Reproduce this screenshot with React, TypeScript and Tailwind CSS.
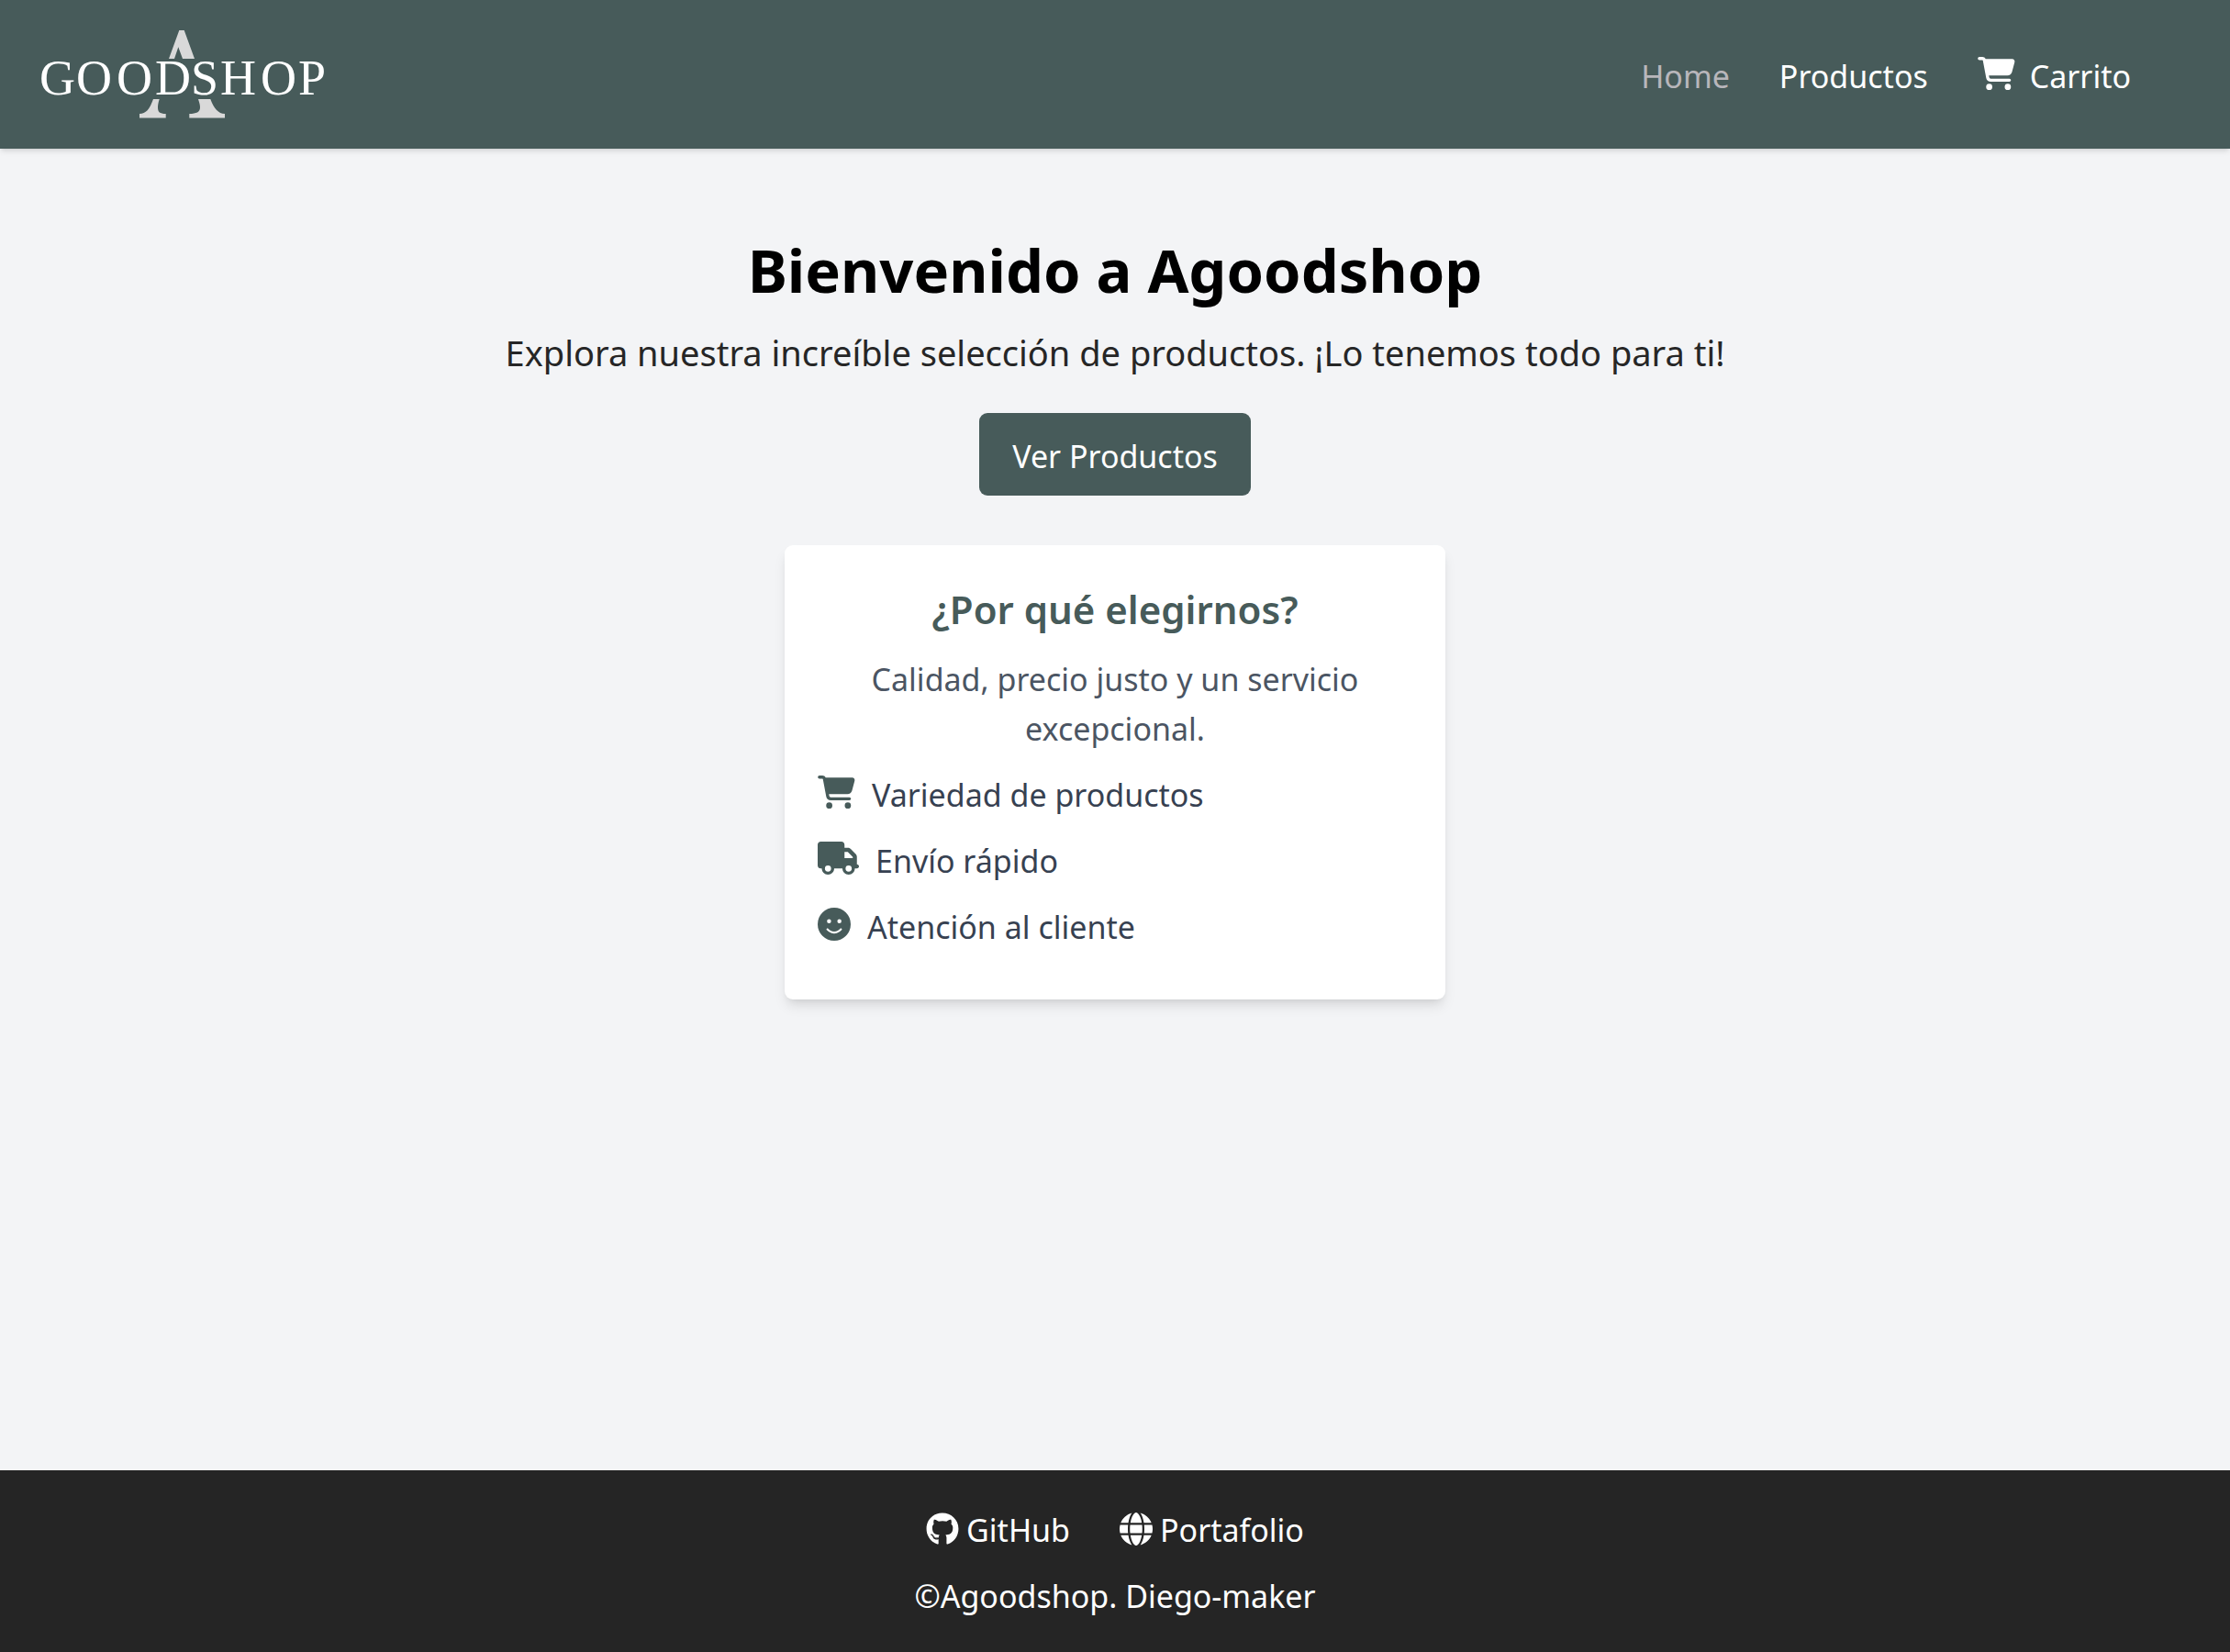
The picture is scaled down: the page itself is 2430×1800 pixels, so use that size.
import { FaCartShopping, FaFaceSmile, FaGithub, FaGlobe, FaTruck } from "react-icons/fa6";

function Logo() {
  return (
    <svg viewBox="0 0 312 98" className="h-[98px] w-[312px] overflow-visible" role="img" aria-label="Agoodshop">
      <g className="fill-[#d9d9d9]">
        <path d="M152.3 1H157.7L169 32H156L151.3 19.3L147 32H141Z" />
        <path d="M124 76H130.7C129.4 80 129 83 129 85C129 90 131 92 137.7 92V96.5H109V92C116 92 120 87 124 76Z" />
        <path d="M173 76H186.3C190 86 195 92 202 92V96.5H163.3V92C171 92 175 90 175 85C175 82 174.3 80 173 76Z" />
      </g>
      <text
        x="0 40 84 126 165 197 241 282"
        y="71"
        className="fill-white font-['Liberation_Serif',serif] text-[54px]"
      >
        GOODSHOP
      </text>
    </svg>
  );
}

const features = [
  { label: "Variedad de productos", icon: <FaCartShopping className="h-9 w-[41px]" /> },
  { label: "Envío rápido", icon: <FaTruck className="h-9 w-[45px]" /> },
  { label: "Atención al cliente", icon: <FaFaceSmile className="h-9 w-9" /> },
];

export default function App() {
  return (
    <div className="flex min-h-screen flex-col bg-[#f3f4f6] font-['Noto_Sans',sans-serif] text-[34px] leading-[54px]">
      <header className="relative flex items-center justify-between bg-[#475b5a] py-8 pr-[108px] pl-[43px] shadow-md">
        <a href="#">
          <Logo />
        </a>
        <nav className="flex gap-[54px] pt-1 text-white">
          <a href="#" className="text-[#b8b6bb]">
            Home
          </a>
          <a href="#">Productos</a>
          <a href="#" className="flex gap-4">
            <FaCartShopping className="mt-1.5 h-9 w-[41px]" />
            Carrito
          </a>
        </nav>
      </header>

      <main className="flex grow flex-col items-center pt-[92px] pb-9">
        <h1 className="text-[65px] leading-[81px] font-bold text-black">Bienvenido a Agoodshop</h1>
        <p className="mt-[18px] text-[38px] leading-[63px] text-[#262626]">
          Explora nuestra increíble selección de productos. ¡Lo tenemos todo para ti!
        </p>
        <button type="button" className="mt-[34px] rounded-[9px] bg-[#475b5a] px-9 pt-5 pb-4 text-white">
          Ver Productos
        </button>

        <section className="mt-[54px] w-full max-w-[720px] rounded-[9px] bg-white px-9 pt-[38px] pb-[34px] shadow-[0_9px_14px_-2px_rgba(0,0,0,0.1),0_5px_9px_-5px_rgba(0,0,0,0.1)]">
          <h2 className="text-center text-[42px] leading-[63px] font-semibold text-[#475b5a]">
            ¿Por qué elegirnos?
          </h2>
          <p className="mt-[18px] text-center text-[#4b5563]">
            Calidad, precio justo y un servicio excepcional.
          </p>
          <ul className="text-[#374151]">
            {features.map((feature) => (
              <li key={feature.label} className="my-[18px] flex gap-[18px]">
                <span className="mt-1.5 text-[#475b5a]">{feature.icon}</span>
                {feature.label}
              </li>
            ))}
          </ul>
        </section>
      </main>

      <footer className="flex flex-col items-center gap-[18px] bg-[#252525] pt-[38px] pb-[34px] text-white">
        <div className="flex gap-[54px]">
          <a href="#" className="flex gap-2">
            <FaGithub className="mt-2 h-9 w-9" />
            GitHub
          </a>
          <a href="#" className="flex gap-2">
            <FaGlobe className="mt-2 h-9 w-9" />
            Portafolio
          </a>
        </div>
        <p>©Agoodshop. Diego-maker</p>
      </footer>
    </div>
  );
}
